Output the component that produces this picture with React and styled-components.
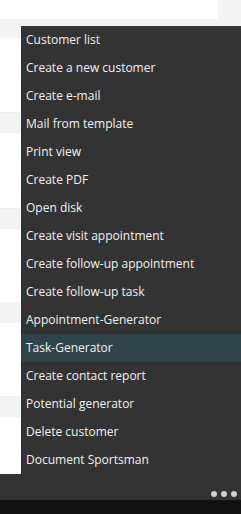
import React from 'react'
import styled, { createGlobalStyle } from 'styled-components'

const GlobalStyle = createGlobalStyle`
  html, body {
    margin: 0;
    padding: 0;
  }
  body {
    font-family: 'Open Sans', 'DejaVu Sans', sans-serif;
    background-color: #f3f3f3;
  }
`

const Page = styled.div`
  position: relative;
  width: 241px;
  height: 514px;
  display: flex;
  flex-direction: column;
  background-color: #f3f3f3;
  overflow: hidden;
`

const Content = styled.div`
  flex: 1;
  display: flex;
  flex-direction: column;
  overflow: hidden;
`

const TopCard = styled.div`
  width: 218px;
  height: 19px;
  flex-shrink: 0;
  background-color: #fff;
  margin-bottom: 19px;
`

const Card = styled.div`
  width: 218px;
  height: ${(p) => p.h}px;
  flex-shrink: 0;
  background-color: #fff;
  margin-bottom: 20px;
  border-bottom: 1px solid #ededed;
`

const Footer = styled.div`
  height: 26px;
  flex-shrink: 0;
  background-color: #333;
  display: flex;
  justify-content: flex-end;
  align-items: flex-end;
  gap: 4px;
  padding: 0 4px 3px 0;
  box-sizing: border-box;
`

const Dot = styled.span`
  width: 6px;
  height: 6px;
  border-radius: 50%;
  background-color: #d0d0d0;
`

const BottomStrip = styled.div`
  height: 14px;
  flex-shrink: 0;
  background-color: #111;
`

const Menu = styled.ul`
  position: absolute;
  top: 26px;
  left: 21px;
  right: 0;
  margin: 0;
  padding: 0;
  list-style: none;
  background-color: #333;
`

const MenuItem = styled.li`
  height: 28px;
  display: flex;
  align-items: center;
  padding: 0 0 2px 5px;
  box-sizing: border-box;
  font-size: 12px;
  color: #f2f2f2;
  background-color: ${(p) => (p.active ? '#2f434a' : 'transparent')};
  white-space: nowrap;
  cursor: pointer;
`

const items = [
  'Customer list',
  'Create a new customer',
  'Create e-mail',
  'Mail from template',
  'Print view',
  'Create PDF',
  'Open disk',
  'Create visit appointment',
  'Create follow-up appointment',
  'Create follow-up task',
  'Appointment-Generator',
  'Task-Generator',
  'Create contact report',
  'Potential generator',
  'Delete customer',
  'Document Sportsman',
]

const cards = [74, 75, 73, 73, 80]

export default function App() {
  return (
    <>
      <GlobalStyle />
      <Page>
        <Content>
          <TopCard />
          {cards.map((h, i) => (
            <Card key={i} h={h} />
          ))}
        </Content>
        <Footer>
          <Dot />
          <Dot />
          <Dot />
        </Footer>
        <BottomStrip />
        <Menu>
          {items.map((label) => (
            <MenuItem key={label} active={label === 'Task-Generator'}>
              {label}
            </MenuItem>
          ))}
        </Menu>
      </Page>
    </>
  )
}
